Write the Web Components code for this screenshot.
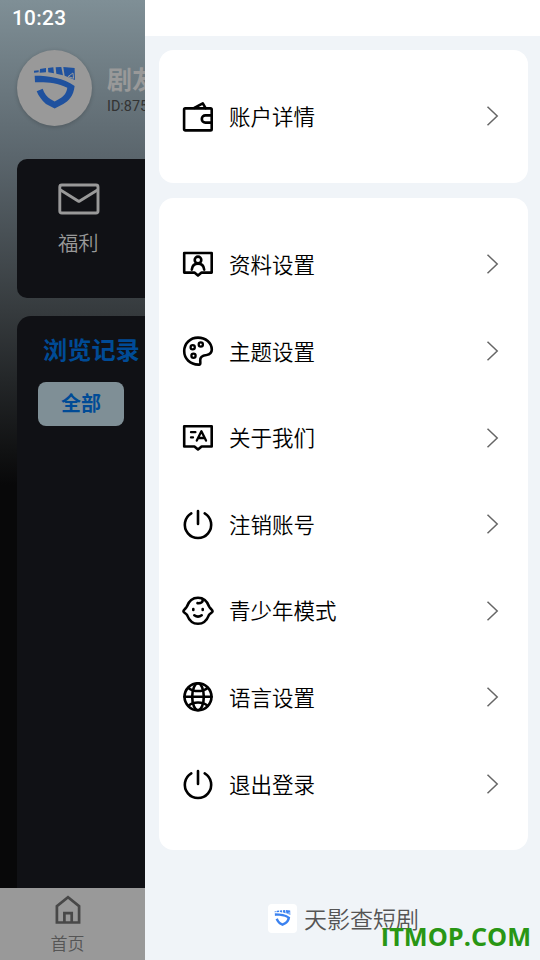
<!DOCTYPE html>
<html lang="zh-CN">
<head>
<meta charset="utf-8">
<title>天影查短剧</title>
<style>
html,body{margin:0;height:100%;overflow:hidden}
body{font-family:Roboto,"Noto Sans CJK SC",sans-serif}
</style>
</head>
<body>
<app-screen></app-screen>
<script>
const ICONS = {
  wallet: '<rect x="2.1" y="8.4" width="27.6" height="22" rx="1.2"/><path d="M12.3 7.900 20.8 3.300l2.8 4.800M29.6 15.400h-6.2a3.6 3.6 0 0 0 0 7.2h6.2"/>',
  profile: '<path d="M2.2 5h27.5v19.6H19.6L16 27.6l-3.6-3H2.2z"/><circle cx="16" cy="11.9" r="3.3"/><path d="M9.8 21.6c.4-3.7 2.9-6 6.2-6s5.800 2.300 6.200 6"/>',
  palette: '<path d="M17.300 29.600C8 30 2.200 23.600 2.200 16.100 2.200 8.400 8.300 2.600 16 2.600c7.500 0 13.800 5 13.800 12 0 3.200-2.300 5-5.300 5.400-4.600.5-6.500 2.300-6.300 5.600.1 1.700.7 3.800-.9 4z"/><g stroke-width="2.300"><circle cx="10.700" cy="12.200" r="2.100"/><circle cx="18.800" cy="9.500" r="2.100"/><circle cx="11.500" cy="20.700" r="2.100"/></g>',
  about: '<path d="M2.200 4.300h27.500v20.200H19.600L16 27.500l-3.600-3H2.200z"/><path d="M14.800 18.600l4.600-9.300 4.600 9.300M16.500 16h5.800M9 10.200h4.400M9 15.400h2" stroke-width="2.300"/>',
  power: '<path d="M9.300 5.400a13.200 13.200 0 1 0 13.400 0M16 3v13"/>',
  baby: '<path d="M4.900 11.500C6.800 6 10.800 2.700 16 2.700s9.200 3.300 11.100 8.800c.4 1.500 3.500 3.400 3.500 4.800 0 1.300-3 2.300-3.700 3.800C24.800 25.600 21.200 28.800 16 28.800S7.200 25.600 5.100 20.100c-.7-1.500-3.700-2.500-3.700-3.800 0-1.400 3.100-3.300 3.500-4.800z"/><path d="M15.500 8.100c3.200.5 5.700-.9 5.100-3.500M11.300 14v1M20.700 14v1M12.300 20.300q3.700 2.600 7.400 0"/>',
  globe: '<circle cx="16" cy="15.800" r="13.500"/><ellipse cx="16" cy="15.800" rx="5.800" ry="13.500"/><path d="M2.400 15.800h27.200M6.500 6.900c5 4.200 14 4.200 19 0M6.500 24.700c5-4.200 14-4.200 19 0"/>'
};

customElements.define('line-icon', class extends HTMLElement {
  connectedCallback() {
    this.attachShadow({mode:'open'}).innerHTML = `
      <style>:host{display:block;width:32px;height:32px;flex:none}svg{display:block}</style>
      <svg width="32" height="32" viewBox="0 0 32 32" fill="none" stroke="#000" stroke-width="2.600" stroke-linecap="round" stroke-linejoin="round">${ICONS[this.getAttribute('name')]}</svg>`;
  }
});

customElements.define('shield-logo', class extends HTMLElement {
  connectedCallback() {
    this.attachShadow({mode:'open'}).innerHTML = `
      <style>:host{display:block}svg{display:block;width:100%;height:100%}</style>
      <svg viewBox="12 17 124 125" fill="currentColor">
        <path d="M12 28l14-1v6l-14 1zM30 23l18-3v13l-19 1zM54 20l16-2 2 18-17-3zM77 18l17-1 5 25-20-5zM100 17l34 3 1 36-31-13z"/>
        <path d="M14 43C60 43 100 50 134 74c-3 31-19 46-34 54l-26 14-26-14C34 116 26 104 20 90l18-8c4 14 14 26 24 32l12 7 12-7c14-8 24-18 26-35C80 64 50 62 15 63z"/>
        <path d="M114 46l15-11 2 16z" fill="none" stroke="var(--plate,#999)" stroke-width="3"/>
      </svg>`;
  }
});

customElements.define('menu-row', class extends HTMLElement {
  connectedCallback() {
    this.attachShadow({mode:'open'}).innerHTML = `
      <style>
        :host{display:flex;align-items:center;height:86.600px;padding:0 29px 0 23px;color:#000;font-size:21.500px;line-height:30px}
        .label{flex:1;margin:-1px 0 0 15px;font-family:"Noto Sans CJK SC",sans-serif;font-weight:350}
        .arrow{display:block;width:13px;height:20px}
      </style>
      <line-icon name="${this.getAttribute('icon')}"></line-icon>
      <span class="label"><slot></slot></span>
      <svg class="arrow" viewBox="0 0 13 20" fill="none" stroke="#666" stroke-width="1.500"><path d="M1.500.8 11.200 10 1.500 19.200"/></svg>`;
  }
});

customElements.define('menu-card', class extends HTMLElement {
  connectedCallback() {
    this.attachShadow({mode:'open'}).innerHTML = `
      <style>:host{display:block;background:#fff;border-radius:14.500px;padding:23.200px 0 22.700px;box-sizing:border-box}</style><slot></slot>`;
  }
});

customElements.define('settings-drawer', class extends HTMLElement {
  connectedCallback() {
    this.attachShadow({mode:'open'}).innerHTML = `
      <style>
        :host{display:flex;flex-direction:column;background:#f0f4f8;position:relative}
        .bar{height:36px;background:#fff;flex:none}
        .cards{display:flex;flex-direction:column;gap:15px;padding:14px 12px 0 14px}
        .cards menu-card:first-child{height:133px}
        .brand{display:flex;align-items:center;gap:7px;margin:51px 0 0 123px;height:34px;color:#555;font:350 23px/34px "Noto Sans CJK SC",sans-serif}
        .tile{width:29px;height:29px;border-radius:4px;background:#fff;display:grid;place-items:center;color:#3b82f0;--plate:#fff}
        .tile shield-logo{width:17px;height:16px}
        .mark{position:absolute;right:9px;bottom:7px;color:#299614;font:700 25.300px/34px "Open Sans",sans-serif;white-space:nowrap}
      </style>
      <div class="bar"></div>
      <div class="cards">
        <menu-card><menu-row icon="wallet">账户详情</menu-row></menu-card>
        <menu-card>
          <menu-row icon="profile">资料设置</menu-row>
          <menu-row icon="palette">主题设置</menu-row>
          <menu-row icon="about">关于我们</menu-row>
          <menu-row icon="power">注销账号</menu-row>
          <menu-row icon="baby">青少年模式</menu-row>
          <menu-row icon="globe">语言设置</menu-row>
          <menu-row icon="power">退出登录</menu-row>
        </menu-card>
      </div>
      <div class="brand"><span class="tile"><shield-logo></shield-logo></span><span>天影查短剧</span></div>
      <div class="mark">ITMOP.COM</div>`;
  }
});

customElements.define('dimmed-page', class extends HTMLElement {
  connectedCallback() {
    this.attachShadow({mode:'open'}).innerHTML = `
      <style>
        :host{display:flex;flex-direction:column;overflow:hidden;white-space:nowrap;
          background:linear-gradient(#7f8f96 0,#5b666d 155px,#363b3e 310px,#111213 450px,#080809 485px)}
        .clock{height:36px;padding-left:12px;color:#fff;font:500 20.800px/36px Roboto,sans-serif;letter-spacing:.3px}
        .user{display:flex;gap:15px;padding:14px 0 0 17px;height:109px;box-sizing:border-box}
        .avatar{flex:none;width:75px;height:76px;border-radius:50%;background:#999;display:grid;place-items:center;color:#1f519e;box-shadow:0 1px 4px #0003}
        .avatar shield-logo{width:41.300px;height:41.600px}
        .name{color:#999;font:700 25px/34px "Noto Sans CJK SC",sans-serif;margin-top:11px}
        .id{color:#333;font:400 14.400px/20px Roboto,sans-serif;margin-top:2px}
        .box{margin-left:17px;background:#101115;width:160px;box-sizing:border-box}
        .gift{margin-top:14px;height:139px;border-radius:10px;padding-top:24px;flex:none}
        .gift svg{display:block;margin-left:41px}
        .gift span{display:block;margin:12px 0 0 41px;color:#999;font:350 20.300px/30px "Noto Sans CJK SC",sans-serif}
        .history{margin-top:18px;flex:1;border-radius:14px 0 0 0;padding:16px 0 0 21px}
        h2{margin:-1px 0 0 5px;color:#004b96;font:700 24.200px/35px "Noto Sans CJK SC",sans-serif}
        .tag{margin-top:16px;width:86px;height:44px;border-radius:8px;background:#7f8f96;color:#004b96;text-align:center;font:700 20px/42px "Noto Sans CJK SC",sans-serif}
        nav{height:72px;background:#999;color:#484848;display:flex;flex-direction:column;align-items:center;width:135px;padding-right:10px;flex:none}
        nav svg{margin-top:7px;display:block}
        nav span{font:350 17px/24px "Noto Sans CJK SC",sans-serif;color:#555;margin-top:6px}
      </style>
      <div class="clock">10:23</div>
      <div class="user">
        <div class="avatar"><shield-logo></shield-logo></div>
        <div><div class="name">剧友</div><div class="id">ID:875</div></div>
      </div>
      <div class="box gift">
        <svg width="42" height="32" viewBox="0 0 42 32" fill="none" stroke="#999" stroke-width="2.900" stroke-linejoin="round"><rect x="1.800" y="2" width="38.200" height="28" rx="2"/><path d="M2.500 7 20.900 18.400 39.500 7"/></svg>
        <span>福利</span>
      </div>
      <div class="box history"><h2>浏览记录</h2><div class="tag">全部</div></div>
      <nav><svg width="26" height="30" viewBox="0 0 26 30" fill="none" stroke="currentColor" stroke-width="2.700"><path d="M1.900 27.500V11.200L13 2.200l11.100 9v16.300zM9.400 27.500v-9.300h7.300v9.300"/></svg><span>首页</span></nav>`;
  }
});

customElements.define('app-screen', class extends HTMLElement {
  connectedCallback() {
    this.attachShadow({mode:'open'}).innerHTML = `
      <style>:host{display:grid;grid-template-columns:145px 395px;width:540px;height:960px;overflow:hidden}dimmed-page,settings-drawer{min-width:0;height:960px}</style>
      <dimmed-page></dimmed-page><settings-drawer></settings-drawer>`;
  }
});
</script>
</body>
</html>
